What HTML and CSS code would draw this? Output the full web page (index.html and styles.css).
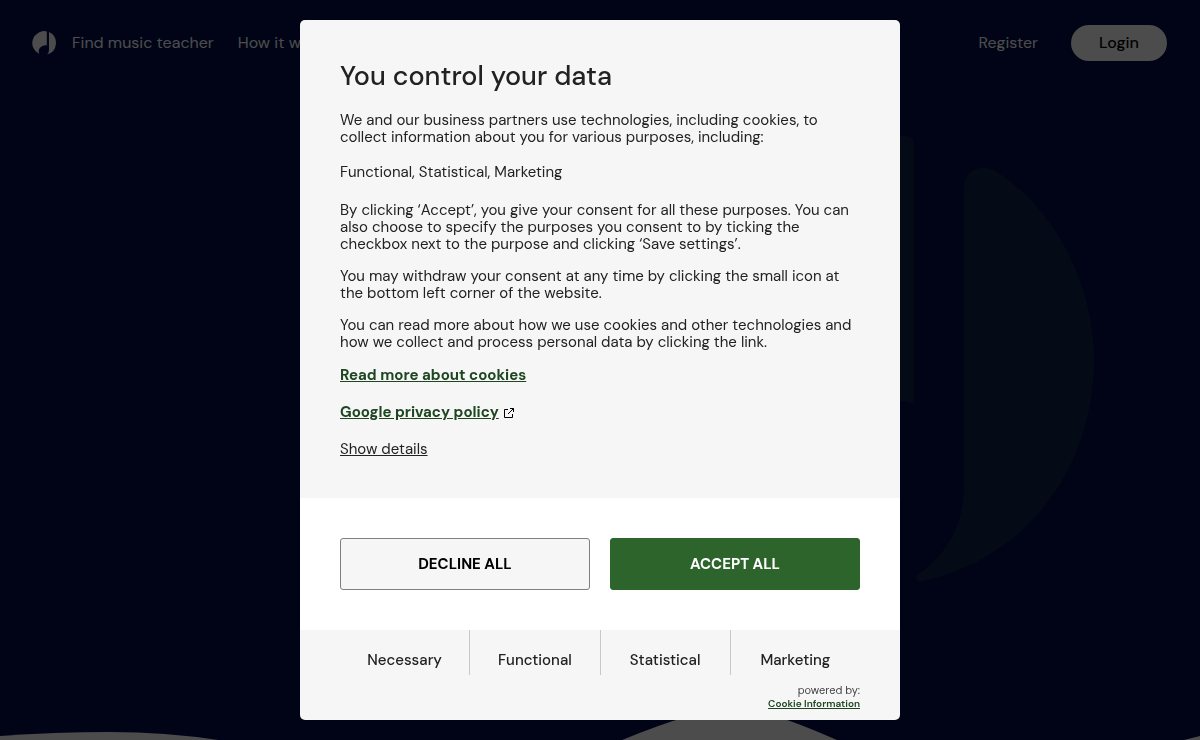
FILE: index.html
```html
<!DOCTYPE html>
<html lang="en">
<head>
    <meta charset="utf-8">
    <meta name="viewport" content="width=device-width, initial-scale=1">
    <title>Find music teacher</title>
    <link rel="stylesheet" href="styles.css">
</head>
<body>
    <div class="page">
        <svg class="page-art" viewBox="0 0 1200 740" preserveAspectRatio="xMidYMax slice" aria-hidden="true">
            <g class="art-logo">
                <path d="M906 136C770 118 648 228 648 367C648 458 700 534 776 570C752 500 790 420 860 402C882 398 898 399 914 404V144Q914 137 906 136Z"/>
                <path d="M964 188C964 170 980 164 994 170C1052 206 1094 280 1094 360C1094 470 1024 560 922 581C915 582 914 576 920 573C946 555 964 525 964 486Z"/>
            </g>
            <g class="art-waves">
                <path d="M0 736Q55 732 110 732Q165 732 218 740H0Z"/>
                <path d="M622 740Q700 708 735 708Q765 708 837 740Z"/>
                <path d="M1184 740L1200 736V740Z"/>
            </g>
        </svg>

        <header class="header">
            <nav class="nav">
                <a href="#" class="logo" aria-label="Home">
                    <svg width="24" height="24" viewBox="0 0 24 24" aria-hidden="true">
                        <path d="M14.8 0.4A12 12 0 0 0 7.2 23C5.4 18.6 8.8 13.7 14.8 14.3Z"/>
                        <path d="M17 1.1A12 12 0 0 1 15 23.6Q17 21.8 17 19Z"/>
                    </svg>
                </a>
                <a href="#">Find music teacher</a>
                <a href="#">How it works</a>
            </nav>
            <div class="account">
                <a href="#">Register</a>
                <a href="#" class="login">Login</a>
            </div>
        </header>
    </div>

    <div class="overlay">
        <div class="modal" role="dialog" aria-modal="true" aria-labelledby="consentTitle">
            <div class="modal-body">
                <h2 id="consentTitle" class="title">You control your data</h2>
                <p class="intro">We and our business partners use technologies, including cookies, to collect information about you for various purposes, including:</p>
                <p class="purposes">Functional, Statistical, Marketing</p>
                <p>By clicking ‘Accept’, you give your consent for all these purposes. You can also choose to specify the purposes you consent to by ticking the checkbox next to the purpose and clicking ‘Save settings’.</p>
                <p>You may withdraw your consent at any time by clicking the small icon at the bottom left corner of the website.</p>
                <p>You can read more about how we use cookies and other technologies and how we collect and process personal data by clicking the link.</p>
                <div class="links">
                    <a href="#" class="policy-link">Read more about cookies</a>
                    <div class="external">
                        <a href="#" class="policy-link">Google privacy policy</a>
                        <svg width="12" height="12" viewBox="0 0 12 12" aria-hidden="true">
                            <path d="M5 2.5H1.5V10.5H9.5V7M7 1.5H10.5V5M10.5 1.5L5 7"/>
                        </svg>
                    </div>
                    <button type="button" class="details">Show details</button>
                </div>
            </div>

            <div class="actions">
                <button type="button" class="button decline">Decline all</button>
                <button type="button" class="button accept">Accept all</button>
            </div>

            <div class="modal-footer">
                <ul class="categories">
                    <li>Necessary</li>
                    <li>Functional</li>
                    <li>Statistical</li>
                    <li>Marketing</li>
                </ul>
                <div class="powered">
                    powered by:
                    <a href="#">Cookie Information</a>
                </div>
            </div>
        </div>
    </div>
</body>
</html>
```
FILE: styles.css
```css
* {
    box-sizing: border-box;
}

body {
    margin: 0;
    font-family: "DM Sans", Lato, sans-serif;
    font-size: 15px;
    line-height: 17px;
    color: #222;
    background-color: #000e4b;
}

button {
    font-family: inherit;
    cursor: pointer;
}

.page {
    position: relative;
    min-height: 100vh;
    overflow: hidden;
}

.page-art {
    position: absolute;
    top: 0;
    left: 0;
    width: 100%;
    height: 100%;
}

.art-logo {
    fill: #0e234b;
}

.art-waves {
    fill: #fff;
}

.header {
    position: relative;
    display: flex;
    justify-content: space-between;
    align-items: center;
    padding: 25px 33px 25px 32px;
    font-size: 16px;
    line-height: 20px;
}

.header a {
    color: #fff;
    text-decoration: none;
}

.nav {
    display: flex;
    align-items: center;
    gap: 24px;
}

.header .logo {
    display: flex;
    margin-right: -8px;
    fill: #fff;
}

.account {
    display: flex;
    align-items: center;
    gap: 33px;
}

.header .login {
    padding: 8px 28px;
    border-radius: 18px;
    background-color: #fff;
    font-weight: 500;
    color: #000;
}

/* consent dialog */
.overlay {
    position: fixed;
    top: 0;
    right: 0;
    bottom: 0;
    left: 0;
    display: flex;
    padding: 20px;
    overflow-y: auto;
    background-color: rgba(0, 0, 0, 0.7);
}

.modal {
    width: 100%;
    max-width: 600px;
    margin: auto;
    border-radius: 5px;
    background-color: #f6f6f6;
    overflow: hidden;
}

.modal-body {
    padding: 40px;
}

.title {
    margin: 0 0 20px;
    font-size: 27px;
    font-weight: 500;
    line-height: 32px;
}

.modal-body p {
    margin: 0 0 15px;
}

.modal-body .intro {
    margin-bottom: 18px;
}

.modal-body .purposes {
    margin-bottom: 21px;
}

.links {
    display: flex;
    flex-direction: column;
    align-items: flex-start;
    gap: 20px;
    padding-top: 1px;
}

.policy-link {
    font-weight: bold;
    color: #1e4620;
}

.external {
    display: flex;
    align-items: center;
    gap: 4px;
}

.external svg {
    fill: none;
    stroke: #000;
}

.details {
    padding: 0;
    border: none;
    background: none;
    font-size: 15px;
    line-height: 17px;
    color: #222;
    text-decoration: underline;
}

.actions {
    display: flex;
    gap: 20px;
    padding: 40px;
    background-color: #fff;
}

.button {
    flex: 1;
    height: 52px;
    border: 1px solid #2c642c;
    border-radius: 3px;
    font-size: 15px;
    font-weight: bold;
    text-transform: uppercase;
}

.decline {
    border-color: #7f7f7f;
    background-color: #f6f6f6;
    color: #000;
}

.accept {
    background-color: #2c642c;
    color: #fff;
}

.modal-footer {
    padding: 0 40px 10px;
}

.categories {
    display: flex;
    margin: 0;
    padding: 0;
    list-style: none;
}

.categories li {
    flex: 1;
    padding: 22px 0 6px;
    font-weight: 500;
    text-align: center;
}

.categories li + li {
    border-left: 1px solid #c8c8c8;
}

.powered {
    padding-top: 9px;
    font-size: 11px;
    line-height: 13px;
    text-align: right;
    color: #444;
}

.powered a {
    display: block;
    font-size: 10px;
    font-weight: 600;
    color: #1e4620;
}
```
